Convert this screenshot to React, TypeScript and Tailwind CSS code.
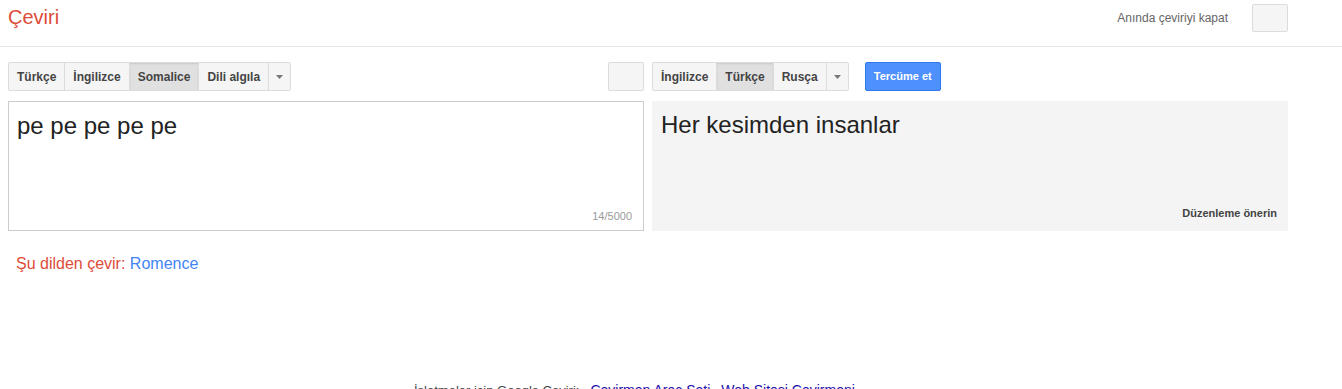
const font = "font-['Arial','Liberation_Sans',sans-serif]"

type Seg = { label: string; active?: boolean }

function SegGroup({ items }: { items: Seg[] }) {
  return (
    <div className="flex h-[29px] rounded-[2px] border border-[#dcdcdc] bg-[#f5f5f5]">
      {items.map((item, i) => (
        <button
          key={item.label}
          type="button"
          className={
            'flex h-full items-center px-[8px] text-[12px] font-bold text-[#444] ' +
            (i > 0 ? 'border-l border-[#dcdcdc] ' : '') +
            (item.active ? 'bg-[#e0e0e0] shadow-[inset_0_1px_2px_rgba(0,0,0,0.1)]' : '')
          }
        >
          {item.label}
        </button>
      ))}
      <button
        type="button"
        className="flex h-full w-[22px] items-center justify-center border-l border-[#dcdcdc]"
      >
        <svg width="7" height="4" viewBox="0 0 7 4">
          <path d="M0 0h7L3.5 4z" fill="#777" />
        </svg>
      </button>
    </div>
  )
}

export default function App() {
  return (
    <div className={`${font} h-[389px] overflow-hidden bg-white`}>
      <header className="flex h-[47px] items-start justify-between border-b border-[#e5e5e5] px-[8px]">
        <h1 className="mt-[5px] text-[20px] leading-[24px] text-[#dd4b39]">Çeviri</h1>
        <div className="mr-[46px] mt-[4px] flex items-center gap-[24px]">
          <span className="text-[12px] text-[#666]">Anında çeviriyi kapat</span>
          <button
            type="button"
            className="h-[28px] w-[36px] rounded-[2px] border border-[#dcdcdc] bg-[#f5f5f5]"
          />
        </div>
      </header>

      <div className="mt-[15px] flex px-[8px]">
        <div className="flex w-[636px] justify-between">
          <SegGroup
            items={[
              { label: 'Türkçe' },
              { label: 'İngilizce' },
              { label: 'Somalice', active: true },
              { label: 'Dili algıla' },
            ]}
          />
          <button
            type="button"
            className="h-[29px] w-[36px] rounded-[2px] border border-[#dcdcdc] bg-[#f5f5f5]"
          />
        </div>
        <div className="ml-[8px] flex items-center">
          <SegGroup
            items={[{ label: 'İngilizce' }, { label: 'Türkçe', active: true }, { label: 'Rusça' }]}
          />
          <button
            type="button"
            className="ml-[16px] h-[29px] w-[76px] rounded-[2px] border border-[#3079ed] bg-[#4d90fe] text-[11px] font-bold text-white"
          >
            Tercüme et
          </button>
        </div>
      </div>

      <div className="mt-[10px] flex gap-[8px] px-[8px]">
        <div className="relative h-[130px] w-[636px] border border-[#cccccc] bg-white">
          <p className="pl-[8px] pt-[8px] text-[24px] leading-[32px] text-[#222]">pe pe pe pe pe</p>
          <span className="absolute bottom-[6px] right-[11px] text-[11px] text-[#999]">14/5000</span>
        </div>
        <div className="relative h-[130px] w-[636px] bg-[#f4f4f4]">
          <p className="pl-[9px] pt-[8px] text-[24px] leading-[32px] text-[#222]">Her kesimden insanlar</p>
          <span className="absolute bottom-[10px] right-[11px] text-[11px] font-bold text-[#444]">
            Düzenleme önerin
          </span>
        </div>
      </div>

      <p className="mt-[21px] pl-[16px] text-[16px] text-[#dd4b39]">
        Şu dilden çevir: <span className="text-[#4285f4]">Romence</span>
      </p>

      <footer className="mt-[106px] flex items-baseline gap-[11px] pl-[414px] text-[13px] leading-[16px] text-[#444]">
        <span>İşletmeler için Google Çeviri:</span>
        <a className="text-[14px] text-[#1a0dab]">Çevirmen Araç Seti</a>
        <a className="text-[14px] text-[#1a0dab]">Web Sitesi Çevirmeni</a>
      </footer>
    </div>
  )
}
